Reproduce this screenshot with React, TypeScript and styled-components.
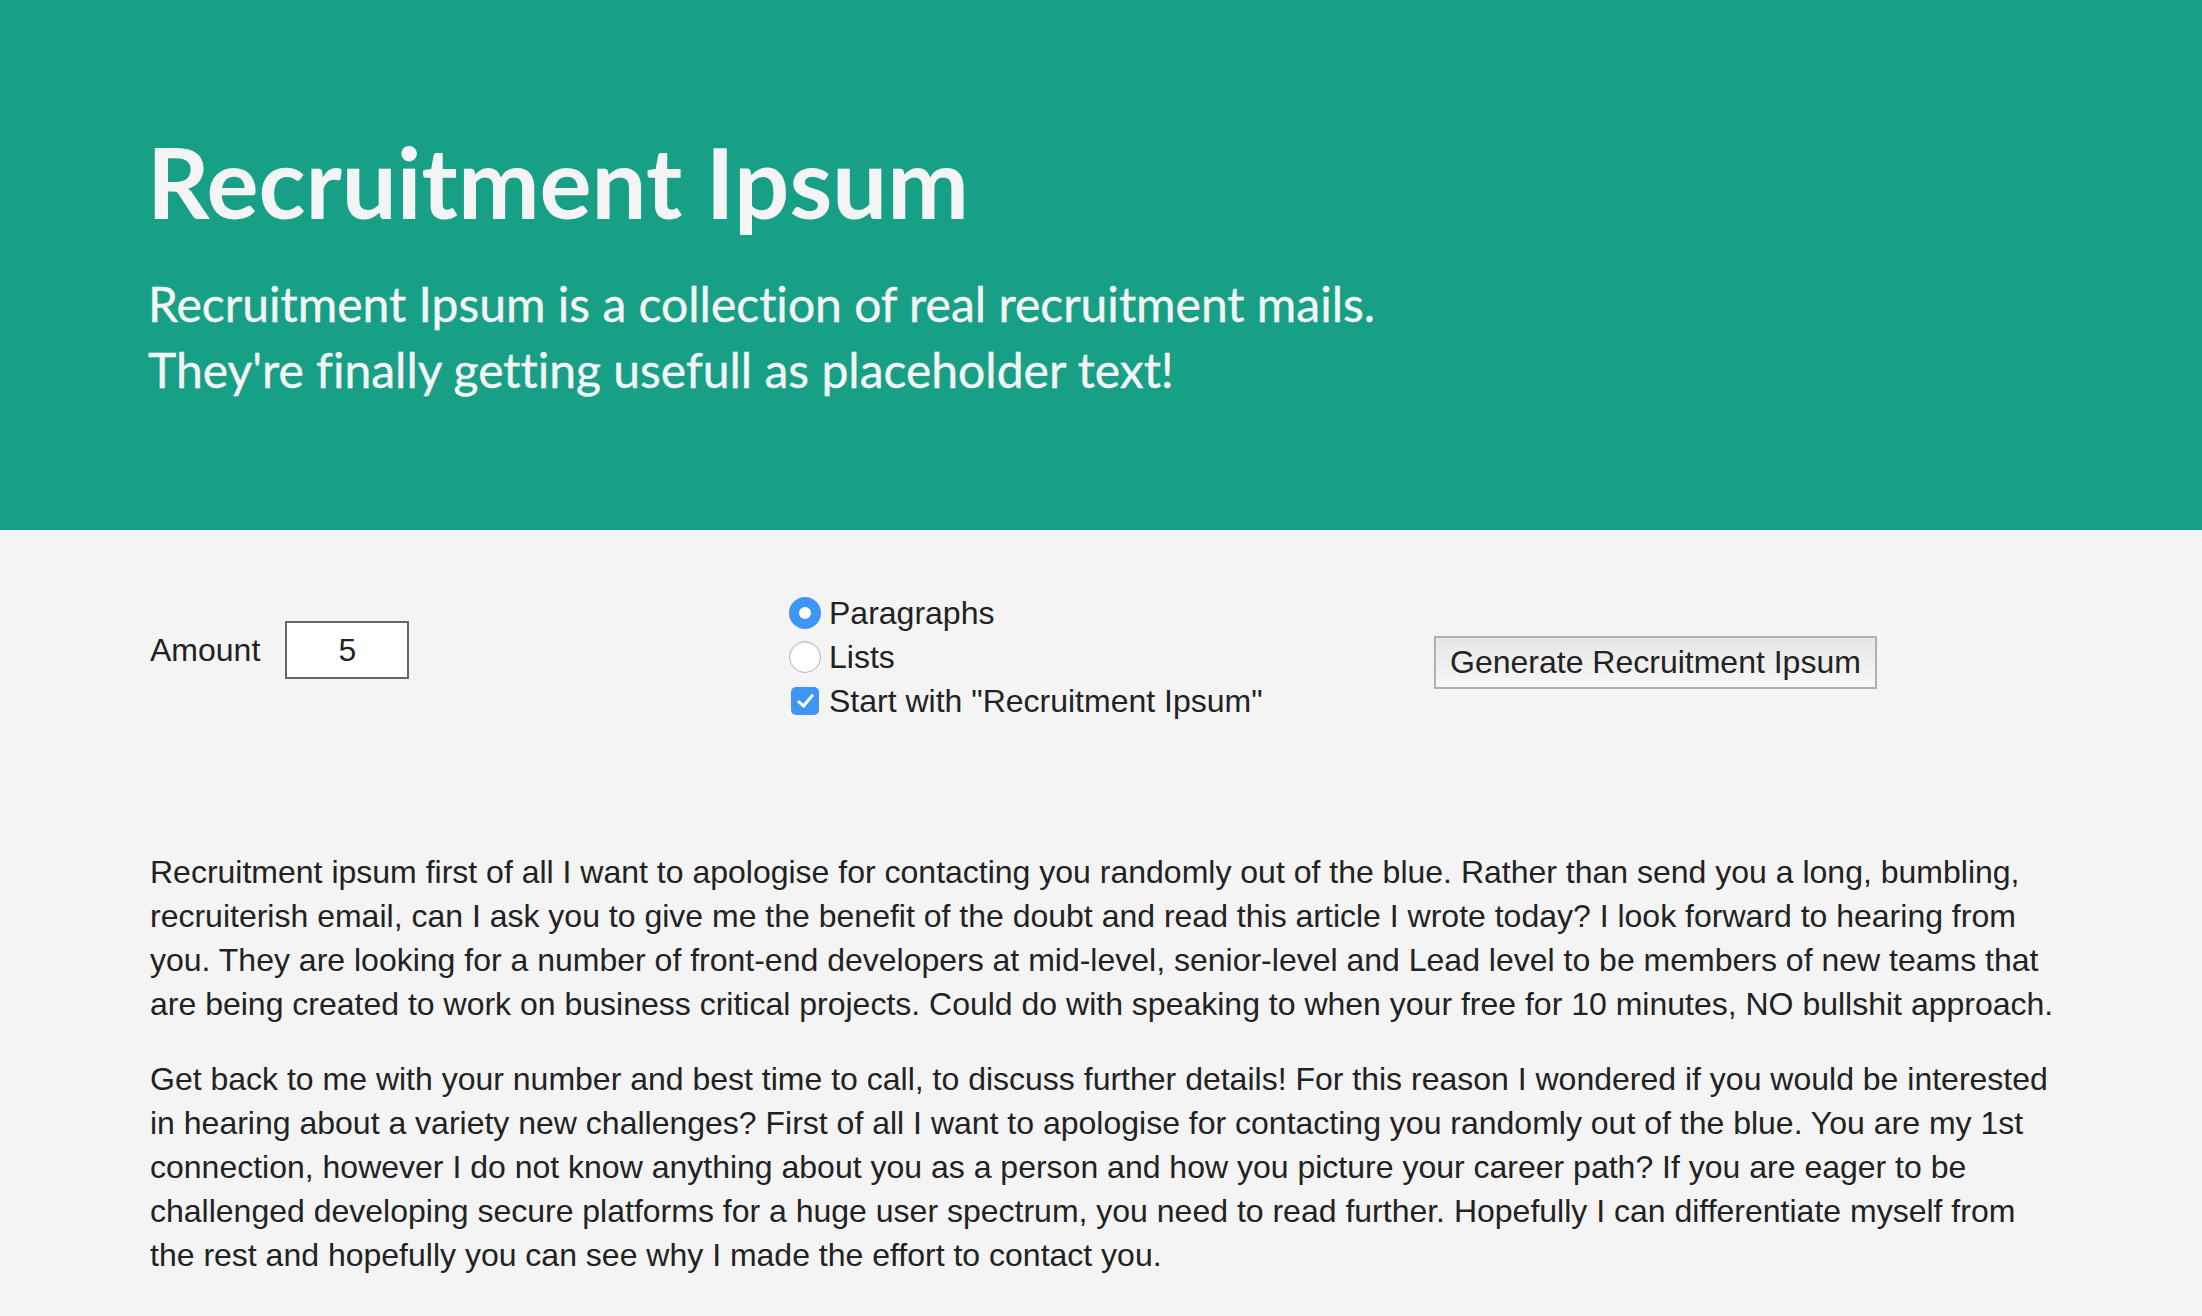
import React from "react";
import styled, { createGlobalStyle } from "styled-components";

const Global = createGlobalStyle`
  html, body { margin: 0; padding: 0; background: #f4f4f4; }
  body { font-family: "Liberation Sans", Arial, sans-serif; color: #222; }
  * { box-sizing: border-box; }
`;

const Header = styled.header`
  background: #17a086;
  color: #f4f4f4;
  padding: 123px 140px 127px 147px;
  font-family: Lato, "Open Sans", sans-serif;
  font-variant-ligatures: none;
`;

const Title = styled.h1`
  margin: 0;
  font-size: 97.5px;
  line-height: 1.2;
  font-weight: 700;
`;

const Subtitle = styled.p`
  margin: 31px 0 0 1px;
  font-size: 48px;
  line-height: 66px;
  font-weight: 400;
  -webkit-text-stroke: 0.4px #f4f4f4;
`;

const Main = styled.main`
  padding: 61px 140px 0 150px;
`;

const Form = styled.form`
  display: grid;
  grid-template-columns: 639px 645px 1fr;
  align-items: start;
`;

const AmountField = styled.label`
  display: flex;
  align-items: center;
  gap: 25px;
  margin-top: 30px;
  font-size: 32px;
`;

const NumberInput = styled.input`
  width: 124px;
  height: 58px;
  border: 2px solid #666;
  background: #fff;
  font-family: "Liberation Sans", Arial, sans-serif;
  font-size: 32px;
  color: #222;
  text-align: center;
  padding: 0;
  outline: none;
`;

const Options = styled.div`
  display: flex;
  flex-direction: column;
`;

const Option = styled.label`
  display: flex;
  align-items: center;
  height: 44px;
  font-size: 32px;
  line-height: 44px;
`;

const Radio = styled.input.attrs({ type: "radio" })`
  appearance: none;
  width: 32px;
  height: 32px;
  margin: 0 8px 0 0;
  border-radius: 50%;
  background: #fff;
  border: 1px solid #b8b8b8;
  box-shadow: inset 0 1px 2px rgba(0, 0, 0, 0.12);
  flex: none;
  &:checked {
    border: 10px solid #3d95f5;
    box-shadow: none;
  }
`;

const Check = styled.input.attrs({ type: "checkbox" })`
  appearance: none;
  width: 28px;
  height: 28px;
  margin: 0 10px 0 2px;
  border-radius: 5px;
  background: #3d95f5;
  flex: none;
  position: relative;
  &::after {
    content: "";
    position: absolute;
    left: 10px;
    top: 4px;
    width: 6px;
    height: 13px;
    border: solid #fff;
    border-width: 0 3px 3px 0;
    transform: rotate(40deg);
  }
`;

const Button = styled.button`
  justify-self: start;
  margin: 45px 0 0 0;
  height: 53px;
  padding: 0 14px;
  border: 2px solid #b0b0b0;
  background: linear-gradient(#e6e6e6, #f7f7f7);
  font-family: "Liberation Sans", Arial, sans-serif;
  font-size: 32px;
  color: #222;
`;

const Output = styled.section`
  padding-top: 127px;
`;

const Paragraph = styled.p`
  margin: 0 0 31px;
  font-size: 32px;
  line-height: 44px;
`;

const paragraphs = [
  "Recruitment ipsum first of all I want to apologise for contacting you randomly out of the blue. Rather than send you a long, bumbling, recruiterish email, can I ask you to give me the benefit of the doubt and read this article I wrote today? I look forward to hearing from you. They are looking for a number of front-end developers at mid-level, senior-level and Lead level to be members of new teams that are being created to work on business critical projects. Could do with speaking to when your free for 10 minutes, NO bullshit approach.",
  "Get back to me with your number and best time to call, to discuss further details! For this reason I wondered if you would be interested in hearing about a variety new challenges? First of all I want to apologise for contacting you randomly out of the blue. You are my 1st connection, however I do not know anything about you as a person and how you picture your career path? If you are eager to be challenged developing secure platforms for a huge user spectrum, you need to read further. Hopefully I can differentiate myself from the rest and hopefully you can see why I made the effort to contact you.",
];

export default function App() {
  return (
    <>
      <Global />
      <Header>
        <Title>Recruitment Ipsum</Title>
        <Subtitle>
          Recruitment Ipsum is a collection of real recruitment mails.
          <br />
          They're finally getting usefull as placeholder text!
        </Subtitle>
      </Header>
      <Main>
        <Form onSubmit={(e) => e.preventDefault()}>
          <AmountField>
            Amount
            <NumberInput defaultValue="5" />
          </AmountField>
          <Options>
            <Option>
              <Radio name="kind" defaultChecked />
              Paragraphs
            </Option>
            <Option>
              <Radio name="kind" />
              Lists
            </Option>
            <Option>
              <Check defaultChecked />
              Start with "Recruitment Ipsum"
            </Option>
          </Options>
          <Button type="submit">Generate Recruitment Ipsum</Button>
        </Form>
        <Output>
          {paragraphs.map((p, i) => (
            <Paragraph key={i}>{p}</Paragraph>
          ))}
        </Output>
      </Main>
    </>
  );
}
